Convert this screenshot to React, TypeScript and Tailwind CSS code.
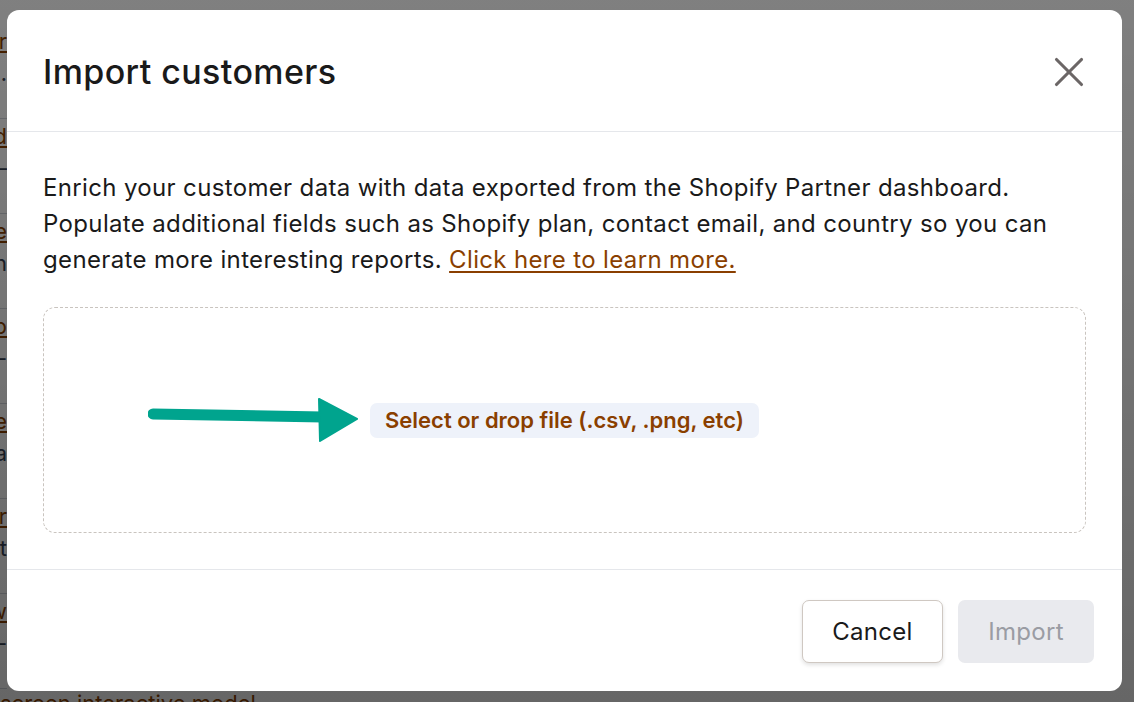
import { X } from 'lucide-react'

const rows = [
  { link: 'Learn mor', sub: 'Customer…' },
  { link: 'Record', sub: 'Sync —' },
  { link: 'Create', sub: 'Open' },
  { link: 'Subscrib', sub: 'Type-' },
  { link: 'Update', sub: 'Data' },
  { link: 'Partner', sub: 'Last' },
  { link: 'Review', sub: 'Sales-' },
]

export default function App() {
  return (
    <div
      className="relative w-[1134px] h-[702px] overflow-hidden bg-white"
      style={{ fontFamily: 'Inter, "Noto Sans", sans-serif' }}
    >
      {/* page behind the dialog */}
      <div className="flex flex-col ml-[-120px] w-[127px] pt-[24px]">
        {rows.map((r) => (
          <div key={r.link} className="h-[95px] border-b border-gray-300 flex flex-col items-end pt-[4px] gap-[6px]">
            <span className="text-[22px] leading-[26px] text-[#8a3f00] underline whitespace-nowrap">{r.link}</span>
            <span className="text-[22px] leading-[26px] text-gray-700 whitespace-nowrap">{r.sub}</span>
          </div>
        ))}
      </div>
      <div className="absolute left-0 top-[690px] text-[22px] leading-[26px] text-[#8a3f00] whitespace-nowrap">
        screen interactive model
      </div>

      {/* overlay */}
      <div className="absolute inset-0 bg-gradient-to-b from-black/50 to-black/60 pl-[7px] pt-[10px]">
        <div className="w-[1115px] h-[681px] bg-white rounded-[12px] flex flex-col text-[#1a1a1a]">
          <div className="h-[122px] border-b border-gray-200 flex items-center justify-between pl-[36px] pr-[28px] pt-[2px]">
            <h1 className="text-[34px] font-medium tracking-[0.4px]">Import customers</h1>
            <X className="w-[50px] h-[50px] text-[#6b6666]" strokeWidth={1.5} />
          </div>

          <div className="flex-1 flex flex-col px-[36px] pt-[38px] border-b border-gray-200">
            <p className="text-[24px] leading-[36px] tracking-[0.35px] text-[#1a1a1a]">
              Enrich your customer data with data exported from the Shopify Partner dashboard.
              <br />
              Populate additional fields such as Shopify plan, contact email, and country so you can
              <br />
              generate more interesting reports.{' '}
              <a className="text-[#8a3f00] underline underline-offset-[3px]" href="#">
                Click here to learn more.
              </a>
            </p>

            <div className="mt-[29px] h-[226px] rounded-[12px] border border-dashed border-[#c9c4bf] flex items-center pl-[104px]">
              <svg width="212" height="46" viewBox="0 0 212 46" className="mr-[10px] mt-[2px]">
                <path d="M5 16 L175 19" stroke="#00a48e" strokeWidth="11" strokeLinecap="round" />
                <path d="M171 1 L209 21 L172 43 Z" fill="#00a48e" stroke="#00a48e" strokeWidth="2" strokeLinejoin="round" />
              </svg>
              <div className="bg-[#eef2fa] rounded-[7px] h-[35px] px-[15px] flex items-center">
                <span className="text-[22px] font-semibold text-[#8a3f00]">Select or drop file (.csv, .png, etc)</span>
              </div>
            </div>
          </div>

          <div className="h-[121px] flex items-center justify-end gap-[15px] pr-[28px] pt-[2px]">
            <button className="h-[63px] w-[141px] rounded-[7px] border border-[#cfc8c2] bg-white text-[24px] tracking-[0.3px] text-[#1a1a1a] shadow-[0_2px_4px_rgba(0,0,0,0.12)]">
              Cancel
            </button>
            <button className="h-[63px] w-[136px] rounded-[7px] bg-[#e9eaee] text-[24px] tracking-[0.3px] text-[#9a9ca3]">
              Import
            </button>
          </div>
        </div>
      </div>
    </div>
  )
}
